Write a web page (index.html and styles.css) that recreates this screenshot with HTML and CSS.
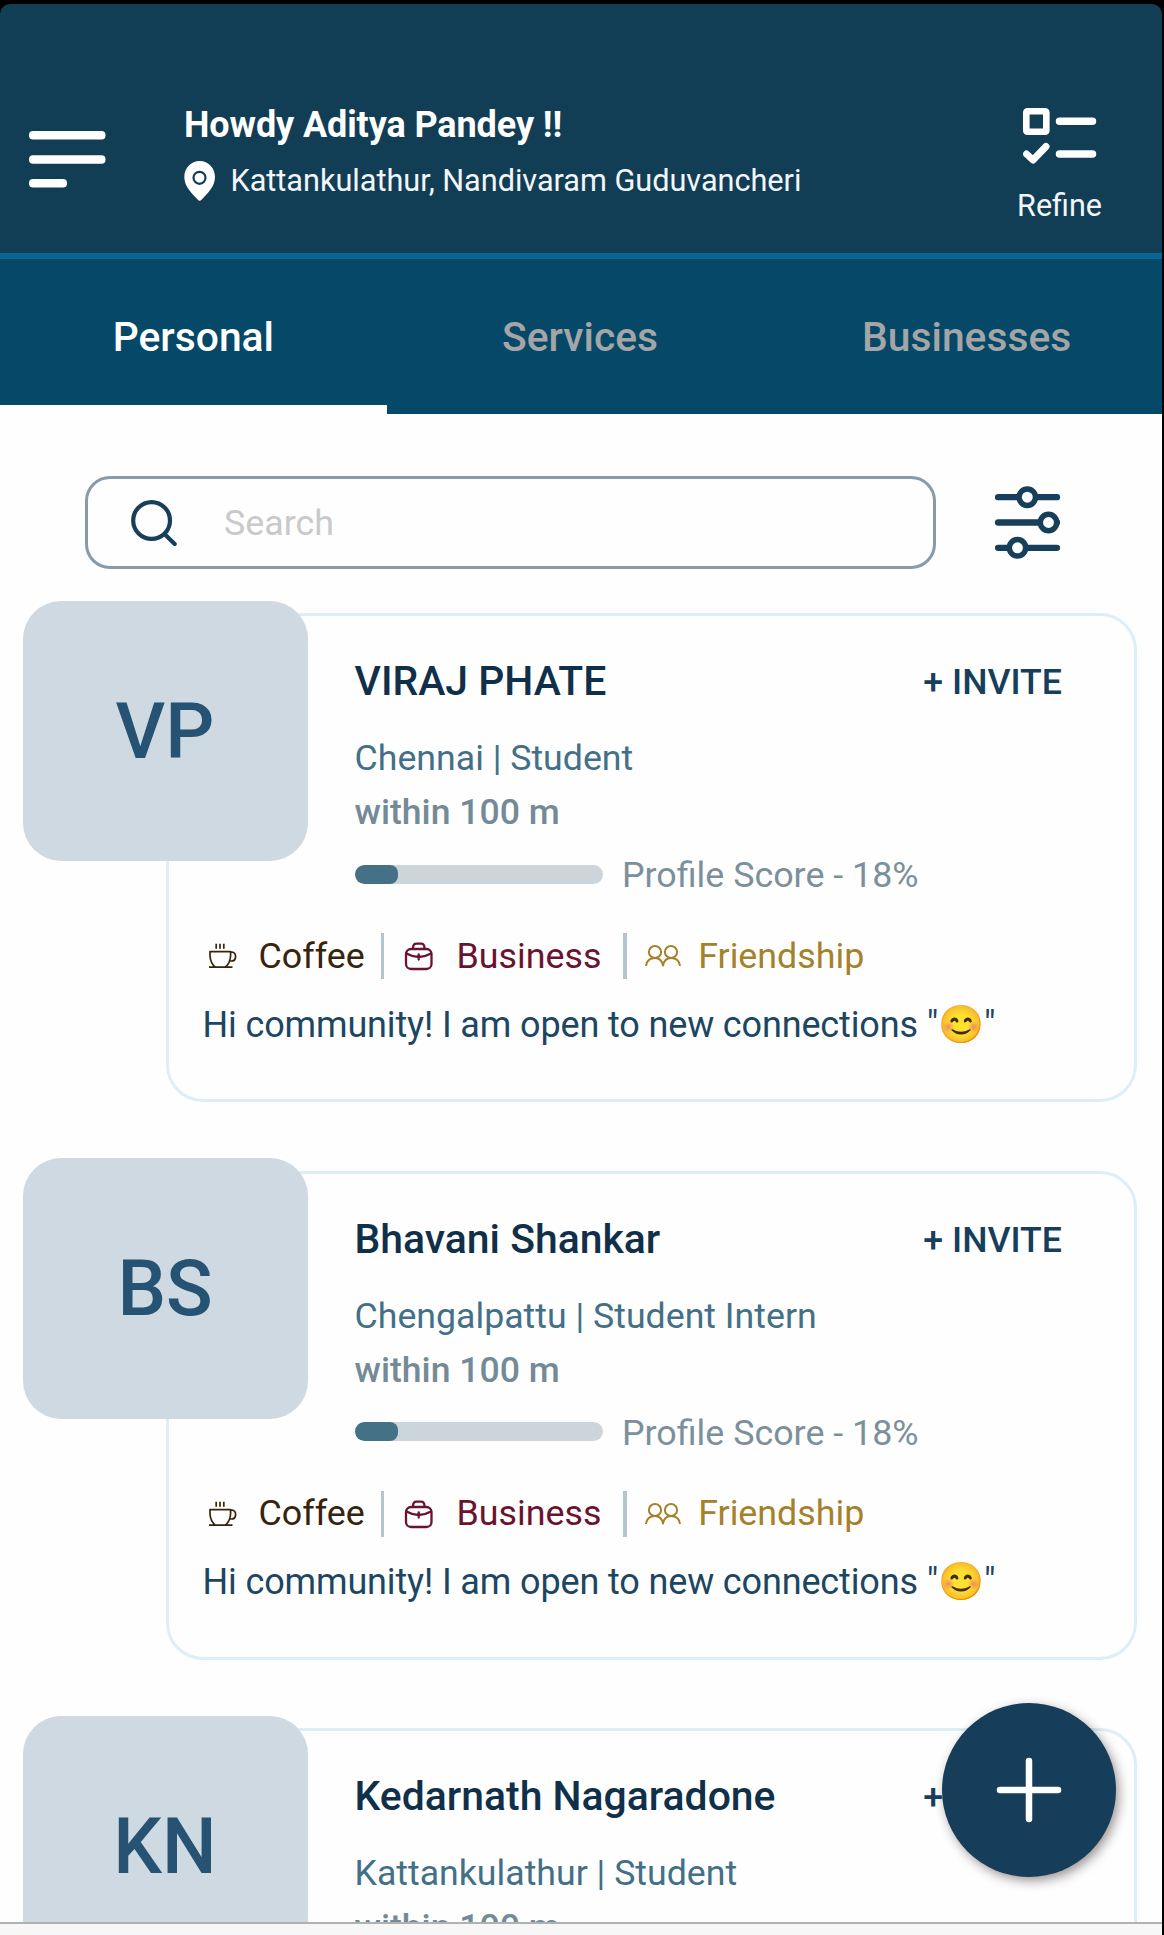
FILE: index.html
```html
<!DOCTYPE html>
<html lang="en">
<head>
<meta charset="utf-8">
<title>Nearby people</title>
<link rel="stylesheet" href="styles.css">
</head>
<body>
<svg class="sprite" aria-hidden="true">
  <symbol id="coffee" viewBox="0 0 30 30">
    <path d="M8.2 2.7v5M12 2.7v5M15.8 2.7v5M2 10.6h20.6v4c0 5-2.6 9.800-5.600 11.600H7.600C4.600 24.400 2 19.600 2 14.600zM1 26.200h23.500M22.600 11.200h1.400c4.900 0 4.900 8.800-.6 8.800h-1.400"/>
  </symbol>
  <symbol id="business" viewBox="0 0 30 30">
    <rect x="2" y="8" width="25.500" height="20" rx="5"/>
    <path d="M9 7.200C9 4 10 2.700 12.500 2.700h4.500c2.500 0 3.500 1.300 3.500 4.500M2.500 12.500q12.200 7 24.500 0M14.700 13.500v5"/>
  </symbol>
  <symbol id="friends" viewBox="0 0 36 30">
    <circle cx="10" cy="11" r="6.100"/><circle cx="26" cy="11" r="6.100"/>
    <path d="M1 25q1-8 9-8 6.500 0 8 7.500 1.500-7.500 8-7.500 8 0 9 8"/>
  </symbol>
</svg>
<div class="app">
  <header class="header">
    <svg class="menu" viewBox="0 0 78 57">
      <rect width="76.500" height="8.500" rx="4"/><rect y="24.200" width="76.500" height="8.500" rx="4"/><rect y="48" width="38" height="8.500" rx="4"/>
    </svg>
    <div class="greeting">
      <h1 class="hello">Howdy Aditya Pandey !!</h1>
      <div class="place">
        <svg class="pin" viewBox="0 0 32 40">
          <path fill="#fff" d="M15.700 0C24.500 0 31 7 31 16c0 10-8 16.500-13.200 22.600q-2.100 2.400-4.200 0C8.400 32.500.3 26 .3 16 .3 7 7 0 15.700 0z"/>
          <circle cx="15.500" cy="16.800" r="6" fill="none" stroke="#113d55" stroke-width="2.200"/>
        </svg>
        <span>Kattankulathur, Nandivaram Guduvancheri</span>
      </div>
    </div>
    <div class="refine">
      <svg class="refine-icon" viewBox="0 0 74 56">
        <rect x="3.300" y="3.300" width="20" height="20.400" rx="1"/>
        <path d="M36.500 13.200H69.500M36.500 46H69.500"/>
        <path class="check" d="M3.500 46l6.500 6L23 38.500"/>
      </svg>
      <span>Refine</span>
    </div>
  </header>
  <nav class="tabs">
    <a class="tab active">Personal</a>
    <a class="tab">Services</a>
    <a class="tab">Businesses</a>
  </nav>
  <main class="content">
    <div class="search-row">
      <div class="search">
        <svg class="search-icon" viewBox="0 0 46 46"><circle cx="20.600" cy="20.500" r="18.400"/><path d="M34 34.500l9.700 9.500"/></svg>
        <span>Search</span>
      </div>
      <svg class="filter" viewBox="0 0 66 74">
        <path d="M3 11.200h59M3 36.500h59M3 61.800h59"/>
        <circle cx="32.300" cy="11.200" r="8.200"/><circle cx="53.500" cy="36.500" r="8.200"/><circle cx="22.500" cy="61.800" r="8.200"/>
      </svg>
    </div>

    <article class="card">
      <div class="avatar">VP</div>
      <div class="info">
        <div class="top"><h2 class="name">VIRAJ PHATE</h2><span class="invite">+ INVITE</span></div>
        <div class="role">Chennai | Student</div>
        <div class="distance">within 100 m</div>
        <div class="score"><div class="bar"><div class="fill" style="width:17.5%"></div></div><span>Profile Score - 18%</span></div>
      </div>
      <div class="tags">
        <span class="tag coffee"><svg><use href="#coffee"/></svg>Coffee</span>
        <span class="tag business"><svg><use href="#business"/></svg>Business</span>
        <span class="tag friends"><svg><use href="#friends"/></svg>Friendship</span>
      </div>
      <p class="message">Hi community! I am open to new connections "<span class="emoji">😊</span>"</p>
    </article>

    <article class="card">
      <div class="avatar">BS</div>
      <div class="info">
        <div class="top"><h2 class="name">Bhavani Shankar</h2><span class="invite">+ INVITE</span></div>
        <div class="role">Chengalpattu | Student Intern</div>
        <div class="distance">within 100 m</div>
        <div class="score"><div class="bar"><div class="fill" style="width:17.5%"></div></div><span>Profile Score - 18%</span></div>
      </div>
      <div class="tags">
        <span class="tag coffee"><svg><use href="#coffee"/></svg>Coffee</span>
        <span class="tag business"><svg><use href="#business"/></svg>Business</span>
        <span class="tag friends"><svg><use href="#friends"/></svg>Friendship</span>
      </div>
      <p class="message">Hi community! I am open to new connections "<span class="emoji">😊</span>"</p>
    </article>

    <article class="card">
      <div class="avatar">KN</div>
      <div class="info">
        <div class="top"><h2 class="name">Kedarnath Nagaradone</h2><span class="invite">+ INVITE</span></div>
        <div class="role">Kattankulathur | Student</div>
        <div class="distance">within 100 m</div>
      </div>
    </article>
  </main>
  <footer class="bottom"></footer>
  <div class="fab"><svg viewBox="0 0 66 66"><path d="M33 4v58M4 33h58"/></svg></div>
</div>
</body>
</html>
```
FILE: styles.css
```css
* { box-sizing: border-box; }
body {
  margin: 0;
  background: #000;
  font-family: Roboto, "Noto Sans", sans-serif;
  overflow: hidden;
}
svg { display: block; flex: none; fill: none; stroke-linecap: round; stroke-linejoin: round; }
h1, h2, p { margin: 0; }
.sprite { position: absolute; width: 0; height: 0; }
.app {
  position: relative;
  display: flex;
  flex-direction: column;
  width: 1162px;
  height: 1935px;
  padding-top: 4px;
}

.header {
  display: flex;
  align-items: flex-start;
  height: 255px;
  flex: none;
  padding: 98px 60px 0 29px;
  background: #113d55;
  border-bottom: 6px solid #0a6591;
  border-radius: 10px 10px 0 0;
  color: #fff;
}
.menu { width: 78px; height: 57px; margin-top: 29px; fill: #fff; }
.greeting { flex: 1; margin-left: 77px; }
.hello { font-size: 36px; font-weight: 700; line-height: 46px; letter-spacing: -0.1px; }
.place { display: flex; gap: 14.5px; margin-top: 12px; font-size: 30.7px; line-height: 41px; letter-spacing: -0.04px; color: #f3f6f8; }
.pin { width: 32px; height: 40px; margin-top: 1px; }
.refine { display: flex; flex-direction: column; align-items: center; margin-top: 6px; font-size: 30.5px; line-height: 37px; color: #f3f6f8; }
.refine-icon { width: 74px; height: 56px; margin-bottom: 23px; stroke: #fff; stroke-width: 6.600; }
.refine-icon path { stroke-width: 7.500; }
.refine-icon .check { stroke-width: 7; }

.tabs { display: flex; flex: none; height: 155px; padding-right: 2px; background: #054867; }
.tab { flex: 1; font-size: 40.800px; font-weight: 500; line-height: 156px; text-align: center; color: #a3a5a7; }
.tab.active { color: #fff; box-shadow: inset 0 -9px #fefefe; }

.content { flex: 1; min-height: 0; overflow: hidden; padding-top: 62px; background: #fefefe; }
.search-row { display: flex; align-items: center; margin-left: 85px; }
.search {
  display: flex;
  align-items: center;
  gap: 47px;
  width: 851px;
  height: 93px;
  padding-left: 43px;
  border: 3px solid #879bab;
  border-radius: 25px;
  font-size: 35.800px;
  line-height: 44px;
  color: #c9c9cb;
}
.search span { padding-top: 1px; }
.search-icon { width: 46px; height: 46px; stroke: #173f5b; stroke-width: 4.200; }
.filter { width: 66px; height: 74px; margin: 1px 0 0 59px; stroke: #173f5b; stroke-width: 6.300; }
.filter circle { fill: #fefefe; stroke-width: 5.500; }

.card {
  position: relative;
  width: 971px;
  height: 489px;
  margin: 44px 0 68.600px 166px;
  padding: 41px 72px 0 33.500px;
  border: 3px solid #dceef7;
  border-radius: 37px;
}
.card + .card { margin-top: 0; }
.avatar {
  position: absolute;
  left: -146.500px;
  top: -15.500px;
  width: 285px;
  height: 260.500px;
  border-radius: 38px;
  background: #ced9e1;
  color: #265373;
  font-size: 77px;
  font-weight: 500;
  line-height: 262px;
  text-align: center;
}
.info { margin-left: 152px; white-space: nowrap; }
.top { display: flex; justify-content: space-between; line-height: 48px; }
.name { font-size: 40.900px; font-weight: 500; color: #10304a; }
.invite { padding-top: 1px; margin-bottom: -1px; font-size: 35.700px; font-weight: 500; color: #173f5b; }
.role { margin-top: 26px; font-size: 35.700px; line-height: 54px; color: #437087; }
.distance { font-size: 35.600px; font-weight: 500; line-height: 54px; color: #748b97; }
.score { display: flex; align-items: center; gap: 19.500px; margin-top: 13px; font-size: 35.800px; line-height: 44px; color: #7b909b; }
.score span { padding-top: 1px; margin-bottom: -1px; }
.bar { width: 248px; height: 19px; border-radius: 9.500px; background: #cdd5dc; overflow: hidden; }
.fill { height: 100%; border-radius: 8px; background: #457186; }

.tags { display: flex; height: 46px; margin-top: 37px; font-size: 35.800px; line-height: 47px; }
.tag { display: flex; align-items: center; }
.tag svg { width: 30px; height: 30px; stroke: currentColor; stroke-width: 1.700; }
.coffee { gap: 20.500px; padding: 0 16.500px 0 5.500px; color: #38240c; border-right: 3px solid #b3c5ce; }
.coffee svg { stroke-linecap: butt; }
.business { gap: 22px; padding: 0 21.500px 0 20.300px; color: #6b1230; border-right: 4px solid #b3c5ce; }
.business svg { stroke-width: 2.300; }
.friends { gap: 17.500px; padding-left: 17.800px; color: #a5812b; }
.friends svg { width: 36px; stroke-width: 2; stroke-linecap: butt; }
.message { margin-top: 20.500px; font-size: 36px; line-height: 50px; letter-spacing: -0.140px; color: #1c4662; white-space: nowrap; }
.emoji { font-size: 37px; line-height: 1; }

.bottom { flex: none; height: 13px; border-top: 2px solid #b0b1b1; background: #f7f7f7; }
.fab {
  position: absolute;
  left: 942px;
  top: 1703px;
  display: grid;
  place-items: center;
  width: 174px;
  height: 174px;
  border-radius: 50%;
  background: #163d59;
  box-shadow: 3px 4px 11px rgba(40, 25, 25, .45);
}
.fab svg { width: 66px; height: 66px; stroke: #fff; stroke-width: 6.500; }
```
